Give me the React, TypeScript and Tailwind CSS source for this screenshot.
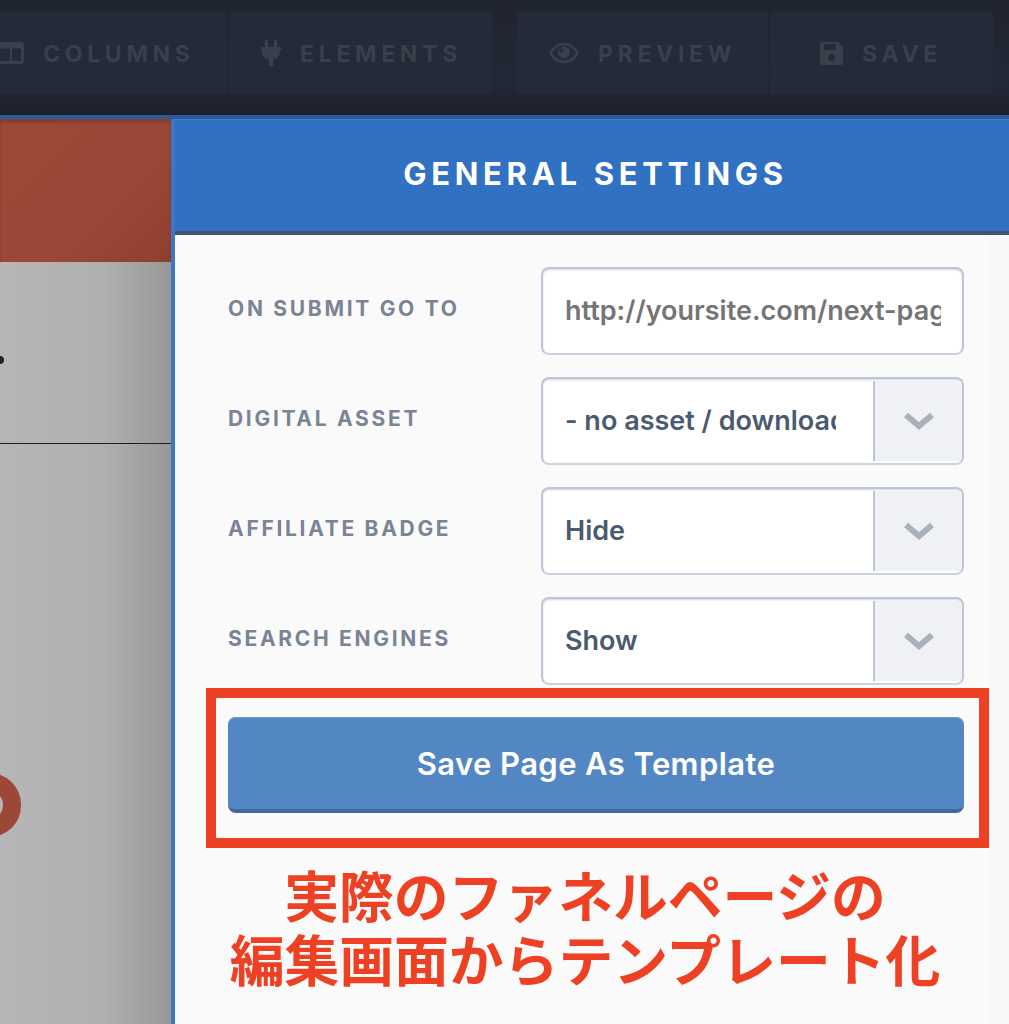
import React from "react";

const sans = "font-['Inter','Noto_Sans',sans-serif]";

function NavCell({ w, icon, label, pl }: { w: string; icon: React.ReactNode; label: string; pl: string }) {
  return (
    <div className={`${w} ${pl} h-[82px] bg-[#242a37] flex items-center gap-[19px] overflow-hidden`}>
      {icon}
      <span className="text-[23px] font-bold tracking-[4.7px] text-[#393f4b] leading-none mt-[2px]">{label}</span>
    </div>
  );
}

function Row({ label, children }: { label: string; children: React.ReactNode }) {
  return (
    <div className="flex h-[88px] items-center">
      <div className="w-[366px] pl-[53px] -mt-[5px] text-[21px] font-bold tracking-[2.7px] text-[#7a8494] leading-none whitespace-nowrap">{label}</div>
      <div className="flex-1 h-full">{children}</div>
    </div>
  );
}

function Select({ value }: { value: string }) {
  return (
    <div className="w-[423px] h-full rounded-[8px] border-2 border-[#bcc6d6] border-b-[#ccd3df] bg-white flex overflow-hidden shadow-[inset_0_1px_2px_rgba(120,135,165,0.35)]">
      <div className="w-[330px] pl-[22px] flex items-center overflow-hidden">
        <span className="block w-[271px] overflow-hidden whitespace-nowrap text-[27px] font-semibold text-[#4a5a70] leading-[32px]">{value}</span>
      </div>
      <div className="flex-1 my-[2px] border-l-2 border-[#bcc5d4] bg-[#eff1f5] flex items-center justify-center">
        <svg width="32" height="20" viewBox="0 0 32 20" fill="none">
          <path d="M3 4 L16 15 L29 4" stroke="#a9b1bd" strokeWidth="6" />
        </svg>
      </div>
    </div>
  );
}

export default function App() {
  return (
    <div className={`w-[1009px] h-[1024px] overflow-hidden flex flex-col bg-[#1e232f] ${sans}`}>
      <header className="h-[115px] shrink-0 bg-[linear-gradient(#20242f,#222836_70%,#1c202b)] flex pt-[12px] overflow-hidden">
        <div className="flex w-[492px] shrink-0 gap-[2px]">
          <NavCell
            w="w-[227px]"
            pl="pl-0"
            label="COLUMNS"
            icon={
              <svg width="33" height="22" viewBox="0 0 33 22" className="shrink-0 -ml-[9px]">
                <path fillRule="evenodd" clipRule="evenodd" fill="#393f4b" d="M3 0H30a3 3 0 0 1 3 3V19a3 3 0 0 1-3 3H3a3 3 0 0 1-3-3V3a3 3 0 0 1 3-3ZM3 6.500V19H19V6.500ZM21 6.500V19H30V6.500Z" />
              </svg>
            }
          />
          <NavCell
            w="w-[263px]"
            pl="pl-[32px]"
            label="ELEMENTS"
            icon={
              <svg width="20" height="26" viewBox="0 0 20 26" className="shrink-0">
                <path fill="#393f4b" d="M4 0h3v7H4zM13 0h3v7h-3zM0 7h20v3h-1v2c0 4-3 7-7 7.500V26H8v-6.500C4 19 1 16 1 12v-2H0z" />
              </svg>
            }
          />
        </div>
        <div className="flex w-[476px] shrink-0 ml-[25px] gap-[2px]">
          <NavCell
            w="w-[251px]"
            pl="pl-[32px]"
            label="PREVIEW"
            icon={
              <svg width="30" height="22" viewBox="0 0 30 22" fill="none" className="shrink-0">
                <path d="M1.500 11C5 5 9.500 2 15 2s10 3 13.500 9C25 17 20.500 20 15 20S5 17 1.500 11Z" stroke="#393f4b" strokeWidth="2.500" />
                <circle cx="15" cy="10.500" r="6" fill="#393f4b" />
                <circle cx="12.500" cy="8.500" r="2" fill="#242a37" />
              </svg>
            }
          />
          <NavCell
            w="w-[223px]"
            pl="pl-[50px]"
            label="SAVE"
            icon={
              <svg width="23" height="23" viewBox="0 0 23 23" className="shrink-0">
                <path fillRule="evenodd" clipRule="evenodd" fill="#393f4b" d="M2 0H18L23 5V21a2 2 0 0 1-2 2H2a2 2 0 0 1-2-2V2a2 2 0 0 1 2-2ZM4 2V8H16V2ZM11.500 12a3.500 3.500 0 1 0 0 7 3.500 3.500 0 0 0 0-7Z" />
              </svg>
            }
          />
        </div>
      </header>
      <div className="h-[4px] shrink-0 bg-[#2a5b9b]" />
      <div className="flex-1 flex min-h-0">
        <aside className="w-[171px] shrink-0 relative overflow-hidden flex flex-col bg-[linear-gradient(90deg,#b6b6b6,#b0b0b0_60%,#989898)]">
          <div className="h-[143px] shrink-0 bg-[linear-gradient(135deg,#9c4938,#9a4737_60%,#8f3f30)] shadow-[inset_0_3px_3px_rgba(90,30,20,0.35)]" />
          <div className="h-[181px] shrink-0" />
          <div className="h-[1px] shrink-0 bg-[#1e1e1e]" />
          <div className="absolute left-[-4px] top-[237px] w-[8px] h-[8px] rounded-full bg-[#222]" />
          <div className="absolute left-[-42px] top-[654px] w-[63px] h-[64px] rounded-full border-[18px] border-[#9c4737]" />
        </aside>
        <main className="flex-1 border-l-[4px] border-[#3a78c6] bg-[linear-gradient(90deg,#fafafa_813px,#f8f8f8_813px)] flex flex-col min-w-0">
          <div className="h-[116px] shrink-0 bg-[#3071c2] border-t border-[#3f7dcb] border-b-[4px] border-b-[#425570] flex items-center justify-center">
            <h1 className="text-[31px] font-bold tracking-[4.7px] text-white leading-none -mt-[4px] pl-[7px]">GENERAL SETTINGS</h1>
          </div>
          <div className="flex flex-col gap-[22px] pt-[32px]">
            <Row label="ON SUBMIT GO TO">
              <div className="w-[423px] h-full rounded-[8px] border-2 border-[#bcc6d6] border-b-[#ccd3df] bg-white flex items-center pl-[22px] shadow-[inset_0_1px_2px_rgba(120,135,165,0.35)]">
                <span className="block w-[376px] overflow-hidden whitespace-nowrap text-[27px] font-semibold text-[#757575] leading-[32px]">http://yoursite.com/next-page</span>
              </div>
            </Row>
            <Row label="DIGITAL ASSET"><Select value="- no asset / download" /></Row>
            <Row label="AFFILIATE BADGE"><Select value="Hide" /></Row>
            <Row label="SEARCH ENGINES"><Select value="Show" /></Row>
          </div>
          <div className="relative ml-[53px] mt-[32px] w-[736px] h-[96px] shrink-0">
            <button className="w-full h-full rounded-[8px] bg-[#5387c4] border-b-[4px] border-[#44699a] shadow-[inset_0_1px_0_#6d99cd] text-white text-[31px] font-semibold tracking-[0.4px] leading-none">
              Save Page As Template
            </button>
            <div className="absolute left-[-22px] right-[-25px] top-[-29px] bottom-[-35px] border-[10px] border-[#ee4023] pointer-events-none" />
          </div>
          <div className="mt-[48px] ml-[-14px] text-center text-[54.800px] leading-[64px] font-bold text-[#ee4023] whitespace-nowrap font-['Noto_Sans_CJK_JP',sans-serif]">
            <div>実際のファネルページの</div>
            <div>編集画面からテンプレート化</div>
          </div>
        </main>
      </div>
    </div>
  );
}
